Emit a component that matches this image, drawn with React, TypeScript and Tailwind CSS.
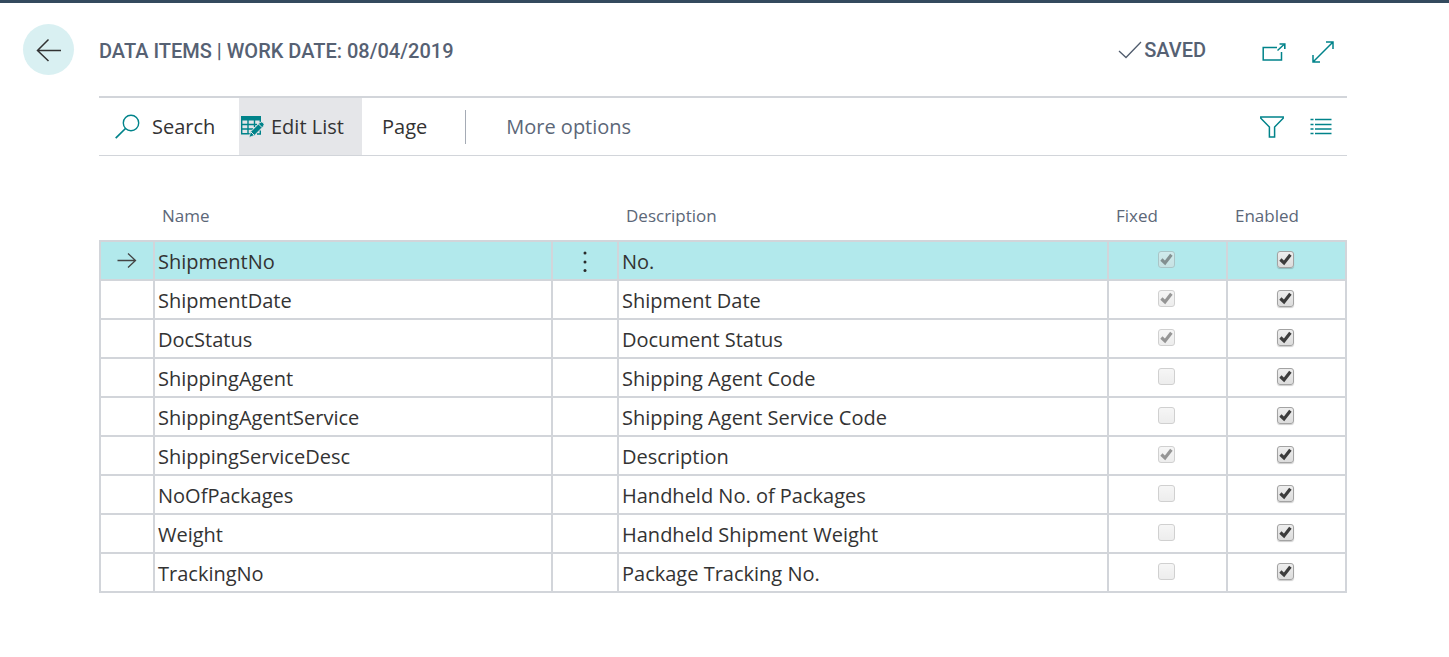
import { useState } from "react";

type Item = { name: string; description: string; fixed: boolean; enabled: boolean };

const initialItems: Item[] = [
  { name: "ShipmentNo", description: "No.", fixed: true, enabled: true },
  { name: "ShipmentDate", description: "Shipment Date", fixed: true, enabled: true },
  { name: "DocStatus", description: "Document Status", fixed: true, enabled: true },
  { name: "ShippingAgent", description: "Shipping Agent Code", fixed: false, enabled: true },
  { name: "ShippingAgentService", description: "Shipping Agent Service Code", fixed: false, enabled: true },
  { name: "ShippingServiceDesc", description: "Description", fixed: true, enabled: true },
  { name: "NoOfPackages", description: "Handheld No. of Packages", fixed: false, enabled: true },
  { name: "Weight", description: "Handheld Shipment Weight", fixed: false, enabled: true },
  { name: "TrackingNo", description: "Package Tracking No.", fixed: false, enabled: true },
];

function BackIcon() {
  return (
    <svg width="26" height="24" viewBox="0 0 26 24" fill="none" stroke="#333" strokeWidth="1.5" aria-hidden="true">
      <path d="M25 12.5H1.5M12.5 1.5L1.5 12.5L12.5 23" />
    </svg>
  );
}

function CheckIcon() {
  return (
    <svg width="24" height="18" viewBox="0 0 24 18" fill="none" stroke="#505c6d" strokeWidth="1.3" aria-hidden="true">
      <path d="M1 10L8 16.5L23 1" />
    </svg>
  );
}

function PopOutIcon() {
  return (
    <svg width="24" height="18" viewBox="0 0 24 18" fill="none" stroke="#00838a" strokeWidth="1.5" aria-hidden="true">
      <path d="M15 4.5H1.2V17H19.5V9" />
      <path d="M15.5 7.5L22 1.5" />
      <path d="M17.5 1H22.8V6" strokeWidth="1.6" />
    </svg>
  );
}

function ExpandIcon() {
  return (
    <svg width="22" height="22" viewBox="0 0 22 22" fill="none" stroke="#00838a" strokeWidth="1.5" aria-hidden="true">
      <path d="M1.5 20.5L20.5 1.5M14 1H21V8M1 14V21H8" />
    </svg>
  );
}

function SearchIcon() {
  return (
    <svg width="25" height="25" viewBox="0 0 25 25" fill="none" stroke="#00838a" strokeWidth="1.4" aria-hidden="true">
      <circle cx="16" cy="9" r="7.7" />
      <path d="M10.5 14.5L0.7 24.2" strokeWidth="1.7" />
    </svg>
  );
}

function EditListIcon() {
  return (
    <svg width="24" height="22" viewBox="0 0 24 22" fill="none" stroke="#00838a" aria-hidden="true">
      <path d="M0.7 1V17.8H9M0.7 8.5H16M0.7 13H12M7 4V17.8M13.5 4V11M19.3 4V6" strokeWidth="1.4" />
      <path d="M0 0H20V4.5H0Z" fill="#00838a" stroke="none" />
      <path d="M8 21.5L9.6 15.8L18.8 6.6Q20.6 5.2 22.2 6.8Q23.8 8.4 22.4 10.2L13.4 19.4Z" fill="#00838a" stroke="#e5e6e9" strokeWidth="0.8" />
      <path d="M9.8 15.8L13.2 19.2M17.5 8L21 11.5" stroke="#e5e6e9" strokeWidth="1" />
      <path d="M16 18H19.3V14.5" strokeWidth="1.4" />
    </svg>
  );
}

function FilterIcon() {
  return (
    <svg width="24" height="22" viewBox="0 0 24 22" fill="none" stroke="#00838a" strokeWidth="1.5" aria-hidden="true">
      <path d="M0.8 1H23.2V2.2L14.6 11V21H9.4V11L0.8 2.2Z" />
    </svg>
  );
}

function ListIcon() {
  return (
    <svg width="22" height="17" viewBox="0 0 22 17" fill="none" stroke="#00838a" strokeWidth="1.5" aria-hidden="true">
      <path d="M0.5 1.5H3.5M5 1.5H21.5M0.5 6.5H3.5M5 6.5H21.5M0.5 11H3.5M5 11H21.5M0.5 15.5H3.5M5 15.5H21.5" />
    </svg>
  );
}

function CheckBox({ label, checked, disabled, onChange }: {
  label: string;
  checked: boolean;
  disabled?: boolean;
  onChange?: () => void;
}) {
  return (
    <div className="flex justify-center pr-0.5 pb-0.5">
      <span className="grid size-[17px] *:[grid-area:1/1]">
        <input
          type="checkbox"
          aria-label={label}
          checked={checked}
          disabled={disabled}
          onChange={() => onChange?.()}
          className="size-[17px] appearance-none rounded-[3px] border border-[#a3a3a3] bg-linear-to-b from-[#eeeeee] to-[#dcdcdc] shadow-[0_1px_1px_rgba(0,0,0,0.2)] disabled:opacity-50 disabled:shadow-none"
        />
        {checked && (
          <svg viewBox="0 0 16 16" className={disabled ? "pointer-events-none size-[17px] opacity-50" : "pointer-events-none size-[17px]"} aria-hidden="true">
            <path d="M3.2 8L6.6 11.2L12.6 3.6" fill="none" stroke="#3c3c3c" strokeWidth="3" />
          </svg>
        )}
      </span>
    </div>
  );
}

const cell = "h-[39px] border-2 border-[#d2d5da] p-0";
const heading = "h-[49px] pl-2 text-left text-[17px] leading-6 font-normal text-[#5c6778]";

export default function App() {
  const [items, setItems] = useState(initialItems);
  const toggle = (index: number) =>
    setItems(items.map((item, i) => (i === index ? { ...item, enabled: !item.enabled } : item)));

  return (
    <div className="min-h-screen border-t-[3px] border-[#344a5e] bg-white font-['Open_Sans',sans-serif] text-[#333333]">
      <header className="flex h-[93px] items-center pr-[115px] pl-[23px] font-[Roboto,sans-serif] text-[20px] leading-6 font-medium text-[#566173]">
        <button aria-label="Back" className="mr-[25px] grid size-[51px] shrink-0 place-items-center rounded-full bg-[#d9f0f2]">
          <BackIcon />
        </button>
        <h1 className="pt-0.5">DATA ITEMS | WORK DATE: 08/04/2019</h1>
        <span className="ml-auto flex items-center gap-0.5">
          <CheckIcon />
          SAVED
        </span>
        <div className="mt-1 ml-14 flex items-center gap-[26px]">
          <button aria-label="Open in new window"><PopOutIcon /></button>
          <button aria-label="Expand"><ExpandIcon /></button>
        </div>
      </header>

      <main className="mr-[102px] ml-[99px]">
        <div role="toolbar" aria-label="Actions" className="flex h-15 items-stretch border-t-2 border-b border-[#d2d5da] text-[20px] leading-7">
          <button className="flex w-[140px] items-center gap-3 pl-4">
            <SearchIcon />
            <span>Search</span>
          </button>
          <button className="flex w-[123px] items-center gap-1.5 bg-[#e5e6e9] pl-0.5">
            <EditListIcon />
            <span>Edit List</span>
          </button>
          <button className="px-5">Page</button>
          <span className="ml-[18px] h-[34px] w-px self-center bg-[#a5abb5]" />
          <button className="px-10 text-[#5c6778]">More options</button>
          <div className="ml-auto flex items-center gap-[26px] pr-[15px]">
            <button aria-label="Filter"><FilterIcon /></button>
            <button aria-label="List view"><ListIcon /></button>
          </div>
        </div>

        <table className="mt-9 w-full table-fixed border-collapse text-[20px] leading-7">
          <colgroup>
            <col className="w-[54px]" />
            <col className="w-[398px]" />
            <col className="w-[66px]" />
            <col />
            <col className="w-[119px]" />
            <col className="w-[119px]" />
          </colgroup>
          <thead>
            <tr>
              <td />
              <th scope="col" className={heading}>Name</th>
              <td />
              <th scope="col" className={heading}>Description</th>
              <th scope="col" className={heading}>Fixed</th>
              <th scope="col" className={heading}>Enabled</th>
            </tr>
          </thead>
          <tbody>
            {items.map((item, index) => (
              <tr key={item.name} className={index === 0 ? "bg-[#b2e9ec]" : ""}>
                <td className={cell}>
                  {index === 0 && (
                    <svg width="20" height="16" viewBox="0 0 20 16" fill="none" stroke="#444" strokeWidth="1.3" className="mx-auto" aria-hidden="true">
                      <path d="M0.5 7.5H18.5M11 0.5L18.5 7.5L11 14.5" />
                    </svg>
                  )}
                </td>
                <td className={cell}><div className="pt-0.5 pl-[3px]">{item.name}</div></td>
                <td className={cell}>
                  {index === 0 && (
                    <button aria-label="Show more options" className="mx-auto block">
                      <svg width="4" height="22" viewBox="0 0 4 22" fill="#292929" aria-hidden="true">
                        <circle cx="2" cy="3" r="1.5" />
                        <circle cx="2" cy="12" r="1.5" />
                        <circle cx="2" cy="20.5" r="1.5" />
                      </svg>
                    </button>
                  )}
                </td>
                <td className={cell}><div className="pt-0.5 pl-[3px]">{item.description}</div></td>
                <td className={cell}><CheckBox label={`${item.name} fixed`} checked={item.fixed} disabled /></td>
                <td className={cell}><CheckBox label={`${item.name} enabled`} checked={item.enabled} onChange={() => toggle(index)} /></td>
              </tr>
            ))}
          </tbody>
        </table>
      </main>
    </div>
  );
}
